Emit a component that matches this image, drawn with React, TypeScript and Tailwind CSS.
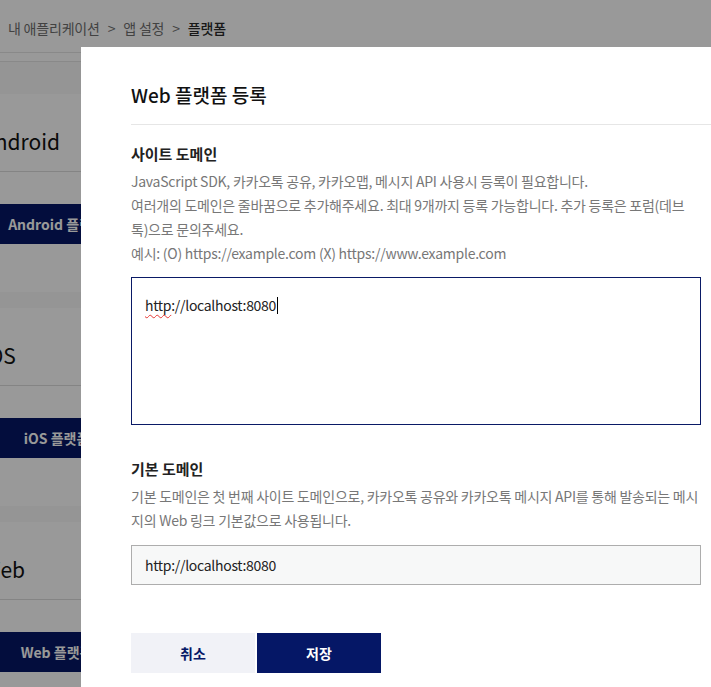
import React from "react";

const sections = [
  { title: "Android", btn: "Android 플랫폼 등록" },
  { title: "iOS", btn: "iOS 플랫폼 등록" },
  { title: "Web", btn: "Web 플랫폼 등록" },
];

export default function App() {
  return (
    <div className="relative h-[687px] w-[711px] overflow-hidden bg-white font-['Noto_Sans_CJK_KR','Noto_Sans',sans-serif] text-[#222]">
      {/* Background page */}
      <div className="flex flex-col">
        <div className="flex h-[52px] items-center gap-[8px] pl-[8px] pt-[4px] text-[14px] tracking-[-0.2px] text-[#6e6e6e]">
          <span>내 애플리케이션</span>
          <span>&gt;</span>
          <span>앱 설정</span>
          <span>&gt;</span>
          <span className="font-medium text-[#2a2a2a]">플랫폼</span>
        </div>
        <div className="h-[9px] border-t border-[#e4e4e4]" />
        <div className="h-[33px] border-t border-[#e4e4e4] bg-[#f9f9f9]" />
        {sections.map((s, i) => (
          <div key={s.title} className="flex flex-col">
            <div className="flex flex-col bg-white">
              <div className="h-[78px] border-b border-[#dcdcdc] pt-[32px]">
                <div className="-ml-[18px] text-[21px] leading-[30px] text-[#111]">{s.title}</div>
              </div>
              <div className="pt-[32px] pb-[48px]">
                <div className="-ml-[39px] flex h-[40px] w-[220px] items-center justify-center bg-[#051766] text-[14px] font-bold text-white">
                  {s.btn}
                </div>
              </div>
            </div>
            {i < 2 && <div className="h-[16px] bg-[#f9f9f9]" />}
          </div>
        ))}
      </div>

      {/* Overlay */}
      <div className="absolute inset-0 bg-black/40" />

      {/* Modal */}
      <div className="absolute left-[81px] top-[47px] h-[700px] w-[670px] bg-white px-[50px]">
        <div className="-mr-[50px] border-b border-[#e6e6e6] pb-[15px] pt-[34px]">
          <h2 className="text-[19px] font-medium leading-[28px] text-[#111]">Web 플랫폼 등록</h2>
        </div>

        <div className="mt-[18px] text-[15px] font-bold leading-[22px] text-[#222]">사이트 도메인</div>
        <div className="mt-[4px] text-[14px] leading-[24px] tracking-[-0.25px] text-[#777]">
          <p>JavaScript SDK, 카카오톡 공유, 카카오맵, 메시지 API 사용시 등록이 필요합니다.</p>
          <p>여러개의 도메인은 줄바꿈으로 추가해주세요. 최대 9개까지 등록 가능합니다. 추가 등록은 포럼(데브톡)으로 문의주세요.</p>
          <p>예시: (O) https://example.com (X) https://www.example.com</p>
        </div>
        <div className="mt-[12px] h-[148px] w-[570px] border border-[#0a1a66] px-[13px] pt-[16px] text-[14px] leading-[22px] tracking-[-0.3px] text-[#222]">
          <span className="underline decoration-wavy decoration-[#e53935] decoration-1 underline-offset-[3px]">http</span>
          <span>://localhost:8080</span>
          <span className="ml-[1px] inline-block h-[17px] w-[1px] translate-y-[3px] bg-black" />
        </div>

        <div className="mt-[33px] text-[15px] font-bold leading-[22px] text-[#222]">기본 도메인</div>
        <div className="mt-[4px] text-[14px] leading-[24px] tracking-[-0.25px] text-[#777]">
          <p>기본 도메인은 첫 번째 사이트 도메인으로, 카카오톡 공유와 카카오톡 메시지 API를 통해 발송되는 메시지의 Web 링크 기본값으로 사용됩니다.</p>
        </div>
        <div className="mt-[13px] flex h-[40px] w-[570px] items-center border border-[#adadad] bg-[#f7f8f8] px-[13px] text-[14px] tracking-[-0.3px] text-[#222]">
          http://localhost:8080
        </div>

        <div className="mt-[48px] flex gap-[2px]">
          <button className="h-[40px] w-[124px] bg-[#f1f2f7] text-[14px] font-bold text-[#051766]">취소</button>
          <button className="h-[40px] w-[124px] bg-[#051766] text-[14px] font-bold text-white">저장</button>
        </div>
      </div>
    </div>
  );
}
